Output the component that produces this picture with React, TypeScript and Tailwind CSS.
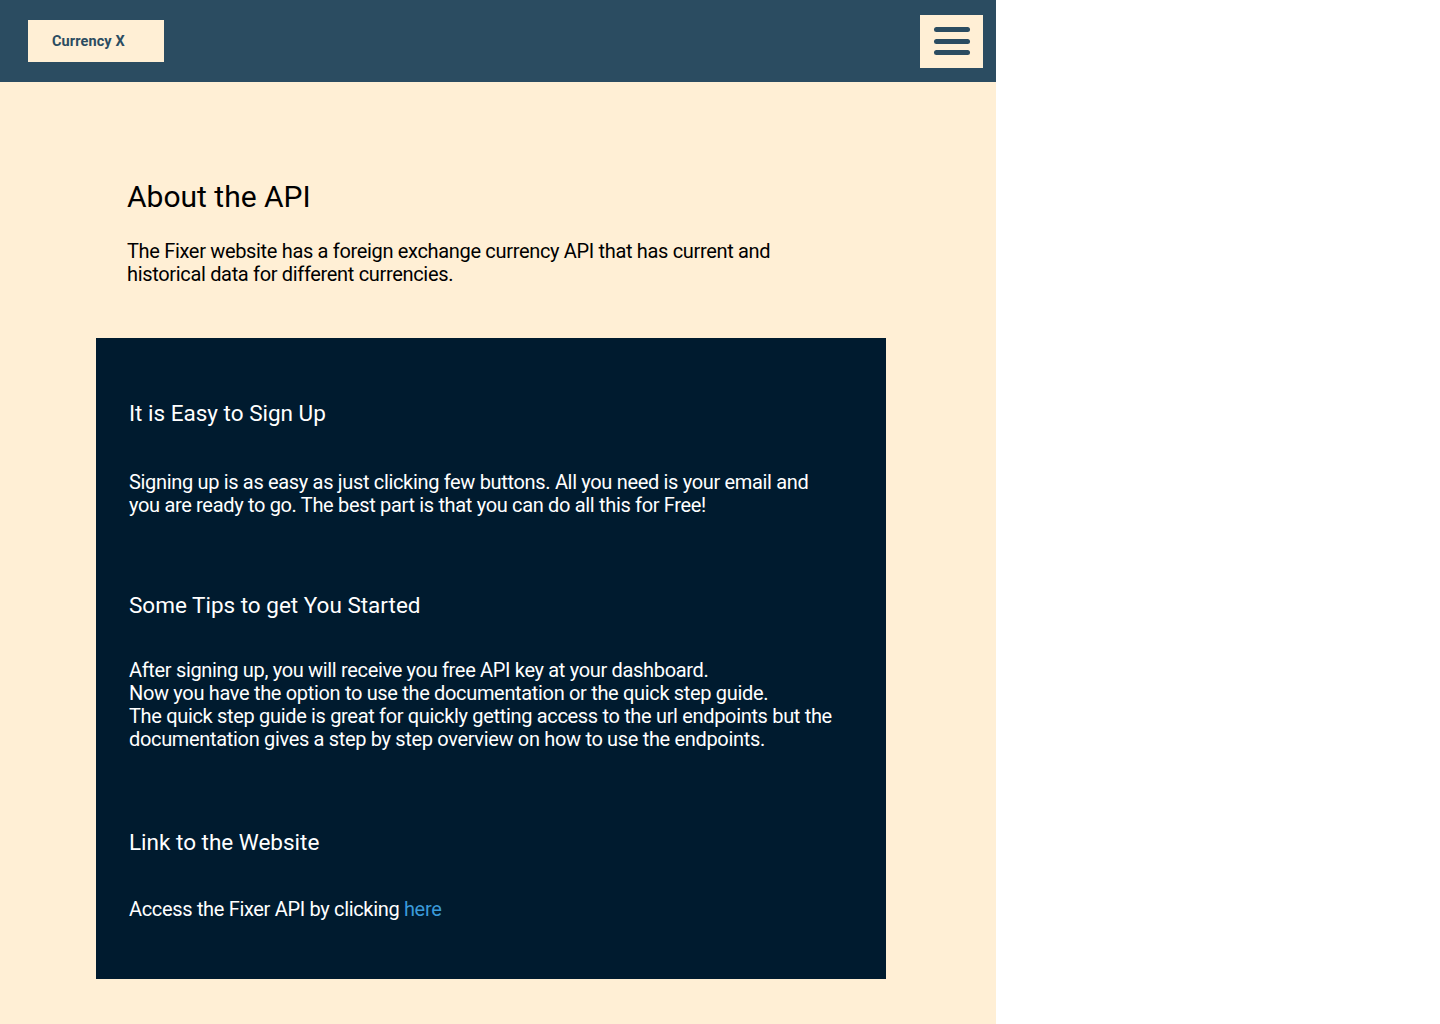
import React from "react";

export default function App() {
  return (
    <div className="w-[996px] min-h-[1024px] bg-[#ffefd5] font-['Roboto',sans-serif]">
      <header className="h-[82px] bg-[#2b4c61] flex items-center justify-between pl-[28px] pr-[13px]">
        <div className="w-[136px] h-[42px] bg-[#ffefd5] flex items-center pl-[24px] pt-[1px]">
          <span className="text-[14.5px] leading-[17px] font-bold text-[#2b4c61] tracking-[0.1px]">Currency X</span>
        </div>
        <button className="w-[63px] h-[53px] bg-[#ffefd5] flex flex-col items-center justify-center gap-[6.5px]">
          <span className="block w-[36px] h-[5px] rounded-full bg-[#2b4c61]"></span>
          <span className="block w-[36px] h-[5px] rounded-full bg-[#2b4c61]"></span>
          <span className="block w-[36px] h-[5px] rounded-full bg-[#2b4c61]"></span>
        </button>
      </header>
      <main className="pl-[96px] pb-[45px]">
        <section className="pl-[31px] pt-[96.5px]">
          <h1 className="text-[30px] leading-[35px] text-black">About the API</h1>
          <p className="mt-[26px] text-[20px] tracking-[-0.33px] text-black leading-[23px] w-[680px]">
            The Fixer website has a foreign exchange currency API that has current and historical data for different currencies.
          </p>
        </section>
        <section className="mt-[52px] w-[790px] bg-[#001b2f] pl-[33px] pr-[44px] pt-[62px] pb-[58px] text-white">
          <h2 className="text-[22.5px] leading-[26px]">It is Easy to Sign Up</h2>
          <p className="mt-[45px] text-[20px] tracking-[-0.33px] leading-[23px]">
            Signing up is as easy as just clicking few buttons. All you need is your email and you are ready to go. The best part is that you can do all this for Free!
          </p>
          <h2 className="mt-[75.5px] text-[22.5px] leading-[26px]">Some Tips to get You Started</h2>
          <p className="mt-[41px] text-[20px] tracking-[-0.33px] leading-[23px]">
            After signing up, you will receive you free API key at your dashboard.
            <br />
            Now you have the option to use the documentation or the quick step guide.
            <br />
            The quick step guide is great for quickly getting access to the url endpoints but the documentation gives a step by step overview on how to use the endpoints.
          </p>
          <h2 className="mt-[78px] text-[22.5px] leading-[26px]">Link to the Website</h2>
          <p className="mt-[43px] text-[20px] tracking-[-0.33px] leading-[23px]">
            Access the Fixer API by clicking <a className="text-[#3a9ad9]" href="#">here</a>
          </p>
        </section>
      </main>
    </div>
  );
}
